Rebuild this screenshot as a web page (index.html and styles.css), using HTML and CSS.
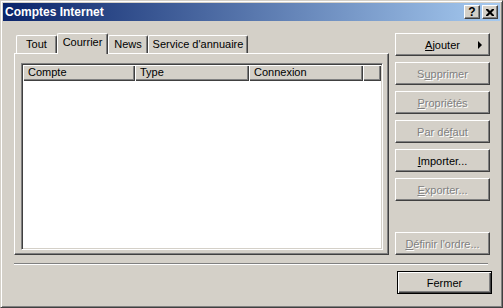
FILE: index.html
```html
<!DOCTYPE html>
<html lang="fr">
<head>
    <meta charset="UTF-8">
    <title>Comptes Internet</title>
    <link rel="stylesheet" href="styles.css">
</head>
<body>
    <div class="window">
        <div class="titlebar">
            <span class="title">Comptes Internet</span>
            <div class="caption-buttons">
                <span class="cap-btn help">?</span>
                <span class="cap-btn close">
                    <svg width="8" height="7" viewBox="0 0 8 7">
                        <path d="M0 0h2l2 2 2-2h2v1l-2.5 2.5 2.5 2.5v1h-2l-2-2-2 2h-2v-1l2.5-2.5-2.5-2.5z" fill="#000"/>
                    </svg>
                </span>
            </div>
        </div>

        <div class="main">
            <div class="left">
                <div class="tabs">
                    <div class="tab tab-tout">Tout</div>
                    <div class="tab tab-courrier selected">Courrier</div>
                    <div class="tab tab-news">News</div>
                    <div class="tab tab-service">Service d'annuaire</div>
                </div>
                <div class="panel">
                    <div class="listbox">
                        <div class="list-header">
                            <div class="col col-compte">Compte</div>
                            <div class="col col-type">Type</div>
                            <div class="col col-connexion">Connexion</div>
                            <div class="col col-rest"></div>
                        </div>
                    </div>
                </div>
            </div>

            <div class="buttons">
                <button class="btn btn-menu"><span></span><span><u>A</u>jouter</span><span class="arrow"></span></button>
                <button class="btn disabled">S<u>u</u>pprimer</button>
                <button class="btn disabled"><u>P</u>ropriétés</button>
                <button class="btn disabled">Par dé<u>f</u>aut</button>
                <button class="btn"><u>I</u>mporter...</button>
                <button class="btn disabled"><u>E</u>xporter...</button>
                <button class="btn disabled btn-bottom"><u>D</u>éfinir l'ordre...</button>
            </div>
        </div>

        <div class="separator"></div>

        <div class="footer">
            <button class="btn btn-default">Fermer</button>
        </div>
    </div>
</body>
</html>
```

FILE: styles.css
```css
body {
    margin: 0;
    font-family: "Liberation Sans", Arial, sans-serif;
    font-size: 11px;
    color: #000;
}
.window {
    width: 503px;
    height: 308px;
    box-sizing: border-box;
    background: #d4d0c8;
    border: 1px solid;
    border-color: #d4d0c8 #404040 #404040 #d4d0c8;
    box-shadow: inset 1px 1px #fff, inset -1px -1px #808080;
    padding: 2px;
}
.titlebar {
    height: 18px;
    display: flex;
    align-items: center;
    justify-content: space-between;
    background: linear-gradient(to right, #0a246a, #a6caf0);
    padding: 0 2px 0 2px;
}
.title {
    color: #fff;
    font-weight: bold;
    font-size: 12px;
    padding-left: 0;
}
.caption-buttons {
    display: flex;
    gap: 2px;
}
.cap-btn {
    width: 16px;
    height: 14px;
    box-sizing: border-box;
    background: #d4d0c8;
    border: 1px solid;
    border-color: #fff #404040 #404040 #fff;
    box-shadow: inset -1px -1px #808080;
    display: flex;
    align-items: center;
    justify-content: center;
    font-weight: bold;
    font-size: 12px;
    line-height: 12px;
}
.close svg {
    display: block;
    margin-left: -1px;
}
.main {
    display: flex;
    padding: 12px 0 0 11px;
}
.left {
    width: 375px;
    display: flex;
    flex-direction: column;
}
.tabs {
    display: flex;
    align-items: flex-end;
    height: 20px;
    padding-left: 2px;
}
.tab {
    height: 18px;
    box-sizing: border-box;
    border-top: 1px solid #fff;
    border-left: 1px solid #fff;
    border-right: 1px solid #404040;
    border-radius: 2px 2px 0 0;
    box-shadow: inset -1px 0 #808080;
    text-align: center;
    line-height: 16px;
}
.tab-tout { width: 41px; }
.tab-courrier { width: 51px; }
.tab-news { width: 40px; }
.tab-service { width: 100px; }
.tab.selected {
    height: 21px;
    margin-bottom: -1px;
    line-height: 16px;
    position: relative;
    z-index: 1;
    background: #d4d0c8;
}
.panel {
    height: 202px;
    box-sizing: border-box;
    border: 1px solid;
    border-color: #fff #404040 #404040 #fff;
    box-shadow: inset -1px -1px #808080;
    padding: 9px 0 0 6px;
}
.listbox {
    width: 362px;
    height: 187px;
    box-sizing: border-box;
    background: #fff;
    border: 1px solid;
    border-color: #808080 #fff #fff #808080;
    box-shadow: inset 1px 1px #404040, inset -1px -1px #d4d0c8;
    padding: 1px;
}
.list-header {
    display: flex;
    height: 16px;
}
.col {
    box-sizing: border-box;
    background: #d4d0c8;
    box-shadow: inset 1px 1px #fff, inset -1px -1px #404040, inset -2px -2px #808080;
    padding-left: 5px;
    line-height: 15px;
}
.col-compte { width: 112px; }
.col-type { width: 114px; }
.col-connexion { width: 114px; }
.col-rest { flex: 1; }
.buttons {
    display: flex;
    flex-direction: column;
    gap: 6px;
    margin-left: 6px;
    width: 95px;
}
.btn {
    width: 95px;
    height: 23px;
    box-sizing: border-box;
    background: #d4d0c8;
    border: 1px solid;
    border-color: #fff #404040 #404040 #fff;
    box-shadow: inset -1px -1px #808080;
    font-family: "Liberation Sans", Arial, sans-serif;
    font-size: 11px;
    color: #000;
    padding: 0;
    text-align: center;
}
.btn.disabled {
    color: #808080;
    text-shadow: 1px 1px 0 #fff;
}
.btn-menu {
    display: grid;
    grid-template-columns: 1fr auto 1fr;
    align-items: center;
}
.arrow {
    justify-self: end;
    margin-right: 7px;
    width: 0;
    height: 0;
    border-top: 4px solid transparent;
    border-bottom: 4px solid transparent;
    border-left: 4px solid #000;
}
.btn-bottom {
    margin-top: auto;
}
.separator {
    margin: 8px 0 0 11px;
    width: 474px;
    height: 1px;
    border-top: 1px solid #808080;
    border-bottom: 1px solid #fff;
    height: 0;
}
.footer {
    display: flex;
    justify-content: flex-end;
    padding: 6px 8px 0 0;
}
.btn-default {
    border: 1px solid #000;
    box-shadow: inset 1px 1px #fff, inset -1px -1px #404040, inset -2px -2px #808080;
}
```
